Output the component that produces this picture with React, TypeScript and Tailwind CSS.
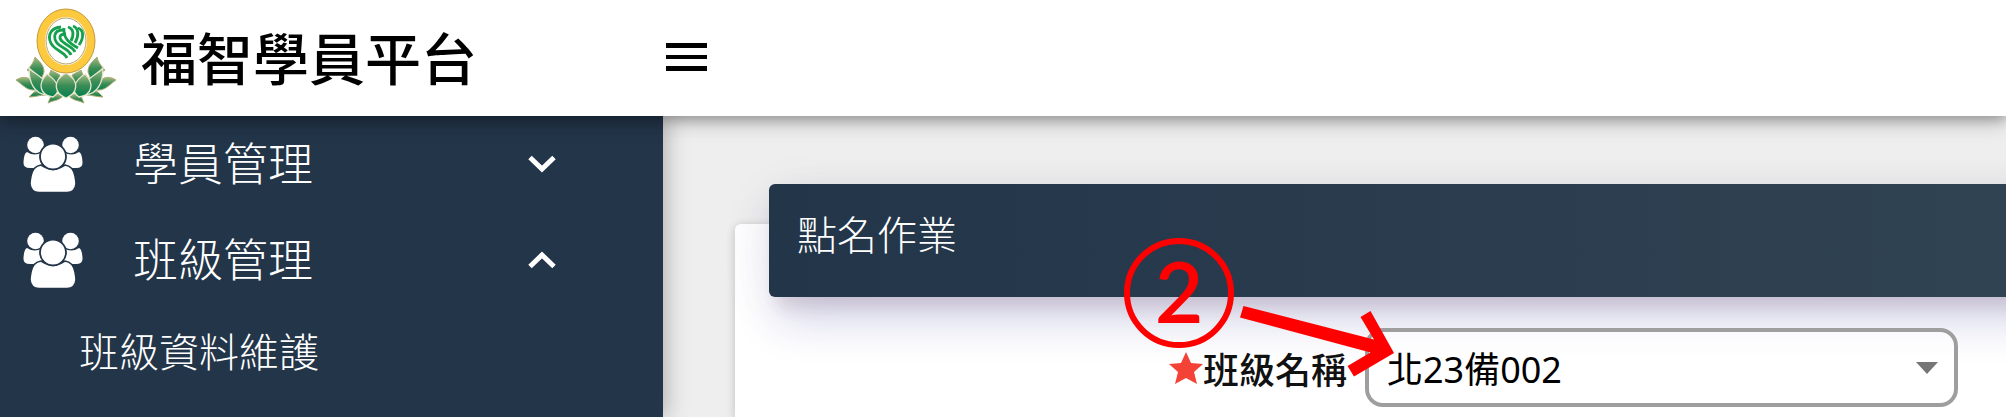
import { useState } from "react";

function Logo() {
  return (
    <svg viewBox="0 0 102 98" className="mb-[2px] h-[98px] w-[102px] shrink-0" aria-hidden="true">
      <defs>
        <linearGradient id="leaf" x1="0" y1="0" x2="0" y2="1">
          <stop offset="0" stopColor="#a3bd84" />
          <stop offset="0.5" stopColor="#3c8c56" />
          <stop offset="1" stopColor="#00804f" />
        </linearGradient>
      </defs>
      <g fill="url(#leaf)" stroke="#b3ab6f" strokeWidth="1">
        <path d="M20 49C25 54 29 57 29 64L26 72L12 62C16 58 19 54 20 49Z" />
        <path d="M82 49C77 54 73 57 73 64L76 72L90 62C86 58 83 54 82 49Z" />
        <path d="M36 62L45 67L40 80L32 72Z" />
        <path d="M66 62L57 67L62 80L70 72Z" />
        <path d="M1 72C6 69 11 68 16 72L21 82C12 83 8 77 1 72Z" />
        <path d="M101 72C96 69 91 68 86 72L81 82C90 83 94 77 101 72Z" />
        <path d="M14 89C17 86 19 83 24 82L31 87C25 87 20 89 14 89Z" />
        <path d="M88 89C85 86 83 83 78 82L71 87C77 87 82 89 88 89Z" />
        <path d="M33 95C35 91 35 88 39 86L49 87C44 93 39 92 33 95Z" />
        <path d="M69 95C67 91 67 88 63 86L53 87C58 93 63 92 69 95Z" />
      </g>
      <g fill="url(#leaf)" stroke="#e5e6cf" strokeWidth="1.3">
        <path d="M14 60C19 66 31 69 32 80L31 87C20 85 14 77 14 60Z" />
        <path d="M88 60C83 66 71 69 70 80L71 87C82 85 88 77 88 60Z" />
        <path d="M32 66C22 76 25 87 38 89C47 83 43 73 32 66Z" />
        <path d="M70 66C80 76 77 87 64 89C55 83 59 73 70 66Z" />
        <path d="M51 65C37 73 39 85 51 90C63 85 65 73 51 65Z" />
      </g>
      <ellipse cx="51" cy="33" rx="30" ry="33" fill="#ffffff" />
      <ellipse cx="51" cy="33" rx="25" ry="28" fill="none" stroke="#fdc93f" strokeWidth="8" />
      <ellipse cx="51" cy="33" rx="29" ry="32" fill="none" stroke="#c49a3c" strokeWidth="1" />
      <ellipse cx="51" cy="33" rx="20" ry="23" fill="none" stroke="#b3a36a" strokeWidth="1" />
      <g fill="none" stroke="#14a04c" strokeWidth="2.800">
        <path d="M46 19C33 20 32 31 38 38C42 43 49 44 52 50" />
        <path d="M48 22C38 22 38 31 43 36C47 40 54 41 56 47" />
        <path d="M51 26C43 26 44 31 48 34C52 38 58 39 60 44" />
        <path d="M49 20C48 30 54 35 63 40" />
        <path d="M53 19C59 21 59 27 56 33" />
        <path d="M58 18C64 20 64 28 60 35" />
        <path d="M63 20C69 22 69 30 64 37" />
      </g>
    </svg>
  );
}

function UsersIcon() {
  return (
    <svg viewBox="0 0 60 56" className="h-14 w-[60px] shrink-0" fill="#ffffff" aria-hidden="true">
      <circle cx="12.500" cy="9" r="8.300" />
      <circle cx="47.500" cy="9" r="8.300" />
      <path d="M4 16Q12 21 19 16V32H7Q0 32 0.500 26Q1 17 4 16Z" />
      <path d="M56 16Q48 21 41 16V32H53Q60 32 59.500 26Q59 17 56 16Z" />
      <path
        d="M18 29Q30 37 42 29Q50 30 52 40Q53 45 53 48Q52 56.500 44 56.500H16Q8 56.500 7 48Q7 45 8 40Q10 30 18 29Z"
        stroke="#233549"
        strokeWidth="1.600"
      />
      <circle cx="30" cy="20.500" r="13" stroke="#233549" strokeWidth="1.800" />
    </svg>
  );
}

function Chevron({ open }: { open: boolean }) {
  return (
    <svg viewBox="0 0 28 18" className="h-[18px] w-7" fill="none" stroke="#ffffff" strokeWidth="5" aria-hidden="true">
      <path d={open ? "M2 15.500L14 4L26 15.500" : "M2 2.500L14 14L26 2.500"} />
    </svg>
  );
}

function MenuGroup({ label, open, onToggle }: { label: string; open: boolean; onToggle: () => void }) {
  return (
    <button
      type="button"
      aria-expanded={open}
      onClick={onToggle}
      className="flex h-24 w-full items-center pr-[107px] pl-[23px] text-left text-[45px] font-light"
    >
      <UsersIcon />
      <span className="ml-[50px] flex-1 pb-1">{label}</span>
      <Chevron open={open} />
    </button>
  );
}

function StepMarker() {
  return (
    <div className="pointer-events-none absolute top-[54px] left-[355px] flex size-[110px] items-center justify-center rounded-full border-6 border-[#ff0000] pb-1 font-['Lato'] text-[84px] leading-none font-semibold text-[#ff0000]">
      2
    </div>
  );
}

function StepArrow() {
  return (
    <svg viewBox="0 0 156 72" className="pointer-events-none absolute top-[121px] left-[471px] h-[72px] w-[156px]" fill="#ff0000" aria-hidden="true">
      <path d="M3.500 1L0 12.500L130.500 47.500L107.500 61L114 71.500L154 48L130.500 6L120.500 12L134 34.500Z" />
    </svg>
  );
}

export default function App() {
  const [open, setOpen] = useState({ students: false, classes: true });

  return (
    <div className="flex h-screen flex-col overflow-hidden bg-[#eeeeee] font-['Noto_Sans_CJK_TC',sans-serif]">
      <header className="relative z-20 flex h-[116px] shrink-0 items-center bg-white shadow-[0_4px_10px_rgba(0,0,0,0.2),0_8px_20px_rgba(0,0,0,0.14),0_2px_20px_rgba(0,0,0,0.12)]">
        <div className="flex w-[663px] shrink-0 items-center pl-[15px]">
          <Logo />
          <h1 className="ml-6 pb-1 text-[56px] leading-none font-medium text-black">福智學員平台</h1>
        </div>
        <button type="button" aria-label="選單" className="px-[3px] pb-[2px]">
          <svg viewBox="0 0 41 28" className="h-7 w-[41px]" aria-hidden="true">
            <path d="M0 0H41V5H0ZM0 12H41V16H0ZM0 23H41V28H0Z" />
          </svg>
        </button>
      </header>

      <div className="flex min-h-0 flex-1">
        <nav className="relative z-10 w-[663px] shrink-0 bg-[#233549] text-white shadow-[4px_0_20px_rgba(0,0,0,0.25)]">
          <MenuGroup label="學員管理" open={open.students} onToggle={() => setOpen({ ...open, students: !open.students })} />
          <MenuGroup label="班級管理" open={open.classes} onToggle={() => setOpen({ ...open, classes: !open.classes })} />
          {open.classes && (
            <a href="#class-data" className="flex h-[88px] items-center pb-1 pl-[79px] text-[40px] font-light">
              班級資料維護
            </a>
          )}
        </nav>

        <main className="flex min-w-0 flex-1 flex-col overflow-hidden pt-[108px] pl-[72px]">
          <section className="flow-root flex-1 rounded-tl-md bg-white pl-[34px] shadow-[0_2px_10px_rgba(0,0,0,0.2)]">
            <div className="relative -mt-10">
              <h2 className="-mr-16 flex h-[113px] items-center rounded-l-md bg-linear-to-r from-[#233549] to-[#314453] pb-4 pl-7 text-[40px] font-light text-white shadow-[0_12px_60px_rgba(0,0,0,0.06),8px_24px_44px_rgba(60,60,180,0.18),8px_10px_16px_rgba(120,60,60,0.14)]">
                點名作業
              </h2>
              <form className="flex items-center pt-[31px] pr-12">
                <label htmlFor="class-name" className="flex w-[596px] shrink-0 items-center justify-end pr-[18px] text-[36px] leading-none font-medium text-[#111111]">
                  <svg viewBox="0 0 34 32" className="h-8 w-[34px]" fill="#f44336" aria-hidden="true">
                    <path d="M17 0L22 11L34 12L25 20L28 32L17 26L6 32L9 20L0 12L12 11Z" />
                  </svg>
                  班級名稱
                </label>
                <div className="relative flex-1">
                  <select
                    id="class-name"
                    className="h-[79px] w-full appearance-none rounded-[18px] border-4 border-[#9e9e9e] bg-white/60 pt-1 pl-[18px] font-['Noto_Sans','Noto_Sans_CJK_TC',sans-serif] text-[36px] font-normal text-black"
                  >
                    <option>北23備002</option>
                  </select>
                  <svg viewBox="0 0 22 12" className="pointer-events-none absolute top-[34px] right-5 h-3 w-[22px]" fill="#757575" aria-hidden="true">
                    <path d="M0 0H22L11 12Z" />
                  </svg>
                </div>
              </form>
              <StepMarker />
              <StepArrow />
            </div>
          </section>
        </main>
      </div>
    </div>
  );
}
